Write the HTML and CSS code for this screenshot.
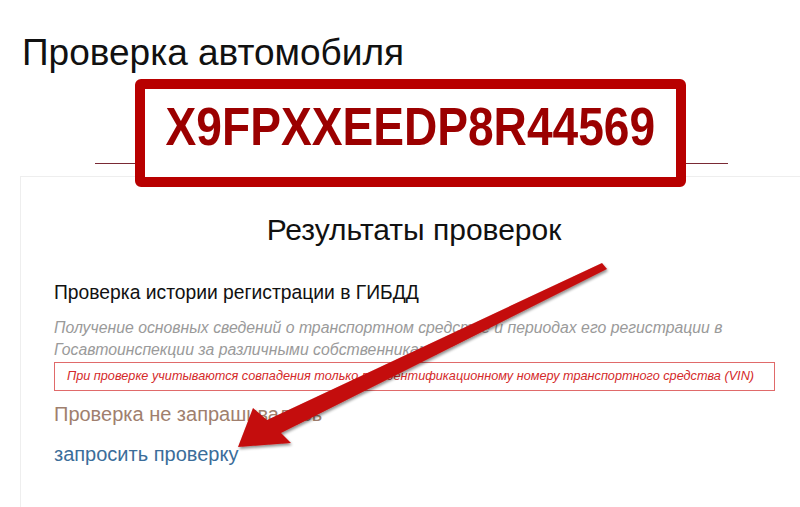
FILE: index.html
```html
<!DOCTYPE html>
<html lang="ru">
<head>
<meta charset="utf-8">
<link rel="stylesheet" href="styles.css">
</head>
<body>
<div class="page">
  <h1 class="title">Проверка автомобиля</h1>
  <div class="rule"></div>
  <div class="card">
    <h2 class="results">Результаты проверок</h2>
    <h3 class="check-title">Проверка истории регистрации в ГИБДД</h3>
    <p class="desc">Получение основных сведений о транспортном средстве и периодах его регистрации в Госавтоинспекции за различными собственниками</p>
    <div class="notice">При проверке учитываются совпадения только по идентификационному номеру транспортного средства (VIN)</div>
    <div class="status">Проверка не запрашивалась</div>
    <a class="link" href="#">запросить проверку</a>
  </div>
  <div class="vin-box"><span class="vin">X9FPXXEEDP8R44569</span></div>
  <svg class="arrow" width="800" height="507" viewBox="0 0 800 507">
    <defs>
      <filter id="sh" x="-10%" y="-10%" width="120%" height="120%">
        <feGaussianBlur in="SourceAlpha" stdDeviation="1.6"/>
        <feOffset dx="1" dy="2" result="b"/>
        <feComponentTransfer><feFuncA type="linear" slope="0.45"/></feComponentTransfer>
        <feMerge><feMergeNode/><feMergeNode in="SourceGraphic"/></feMerge>
      </filter>
    </defs>
    <path filter="url(#sh)" fill="#c40a0a" d="M602 263 L607 269 L281 433 L291 443 L238 447 L253 408 L267 420 Z"/>
  </svg>
</div>
</body>
</html>
```
FILE: styles.css
```css
html, body {
  margin: 0;
  padding: 0;
  background: #fff;
}
.page {
  position: relative;
  width: 800px;
  height: 507px;
  overflow: hidden;
  font-family: "Liberation Sans", Arial, sans-serif;
}
.title {
  margin: 0;
  padding: 32px 0 0 22px;
  font-size: 37px;
  line-height: 42px;
  font-weight: normal;
  color: #111;
}
.rule {
  margin: 89px 0 0 95px;
  width: 633px;
  height: 1px;
  background: #7a2a35;
}
.card {
  margin: 12px -10px 0 20px;
  padding: 35px 0 60px 33px;
  border: 1px solid #eeeeee;
  border-right: none;
  display: flex;
  flex-direction: column;
  align-items: flex-start;
}
.results {
  align-self: stretch;
  margin: 0 0 0 -36px;
  text-align: center;
  font-size: 30px;
  line-height: 36px;
  font-weight: normal;
  color: #111;
}
.check-title {
  margin: 34px 0 0 0;
  font-size: 19.3px;
  line-height: 22px;
  font-weight: normal;
  color: #111;
}
.desc {
  margin: 13px 0 0 0;
  width: 730px;
  font-size: 15.8px;
  line-height: 22px;
  font-style: italic;
  color: #9a9a9a;
}
.notice {
  margin-top: 1px;
  width: 707px;
  padding: 6px 0 6px 12px;
  border: 1px solid #e06a6a;
  font-size: 12.7px;
  line-height: 15px;
  font-style: italic;
  color: #d42a2a;
}
.status {
  margin-top: 11px;
  font-size: 20px;
  line-height: 24px;
  color: #a07f6e;
}
.link {
  margin-top: 16px;
  font-size: 20px;
  line-height: 24px;
  color: #3b6d9a;
  text-decoration: none;
}
.vin-box {
  position: absolute;
  left: 135px;
  top: 79px;
  width: 531px;
  height: 88px;
  border: 10px solid #b80000;
  border-radius: 6px;
  background: #fff;
  display: flex;
  align-items: center;
  justify-content: center;
}
.vin {
  font-family: "Liberation Sans", Arial, sans-serif;
  font-weight: bold;
  font-size: 53px;
  line-height: 60px;
  color: #9b0000;
  margin-top: -12px;
  display: inline-block;
  white-space: nowrap;
  transform: scaleX(0.87);
}
.arrow {
  position: absolute;
  left: 0;
  top: 0;
}
```
